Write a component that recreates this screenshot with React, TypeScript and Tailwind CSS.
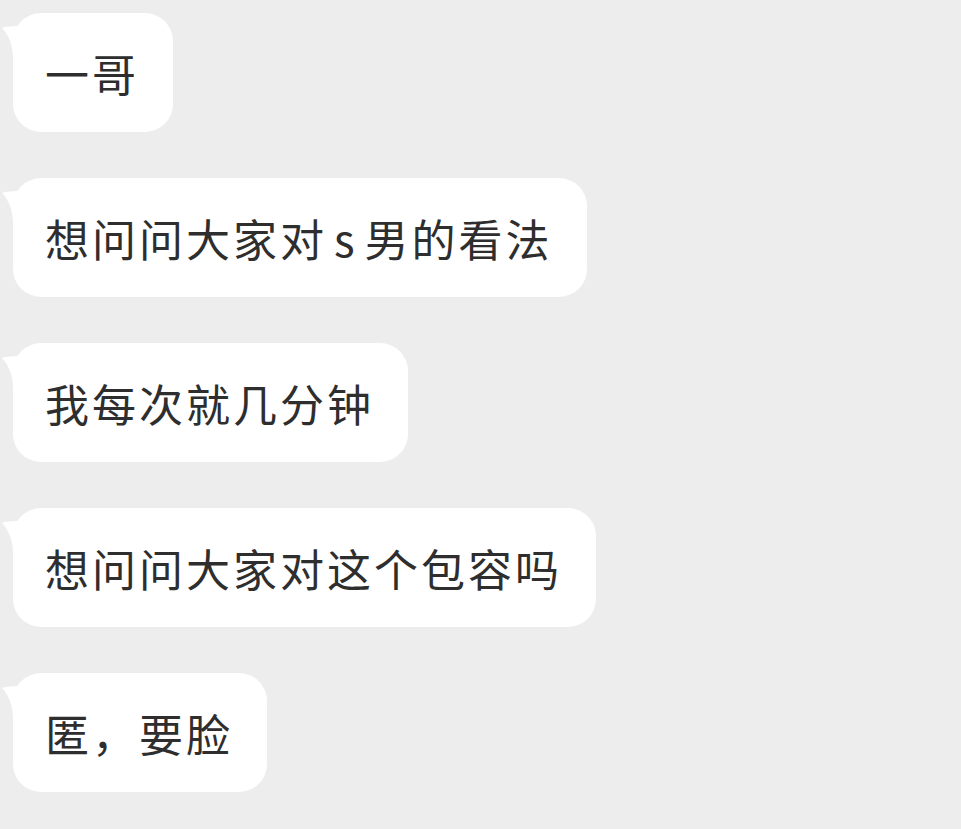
import React from 'react'

const messages: React.ReactNode[] = [
  '一哥',
  <>
    想问问大家对<span className="px-[7px]">s</span>男的看法
  </>,
  '我每次就几分钟',
  '想问问大家对这个包容吗',
  '匿，要脸',
]

// little hook on the upper-left corner of an incoming bubble
function Tail() {
  return (
    <svg
      className="absolute left-[-11px] top-[13px]"
      width="30"
      height="32"
      viewBox="0 0 30 32"
      fill="#ffffff"
    >
      <path d="M0 2 C3 0.5 10 0 24 0 L30 0 L30 32 L11 32 C11 20 7 9 0 2 Z" />
    </svg>
  )
}

function Bubble({ children }: { children: React.ReactNode }) {
  return (
    <div className="relative">
      <Tail />
      <div className="relative flex h-[119px] items-center rounded-[28px] bg-white pl-8 pr-[34px] text-[44px] tracking-[3px] text-[#2e2e2e]">
        <span>{children}</span>
      </div>
    </div>
  )
}

export default function App() {
  return (
    <div
      className="flex h-[829px] w-[961px] flex-col items-start gap-[46px] overflow-hidden bg-[#ededed] pl-[13px] pt-[13px]"
      style={{ fontFamily: '"Noto Sans CJK SC", "Noto Sans", sans-serif' }}
    >
      {messages.map((m, i) => (
        <Bubble key={i}>{m}</Bubble>
      ))}
    </div>
  )
}
